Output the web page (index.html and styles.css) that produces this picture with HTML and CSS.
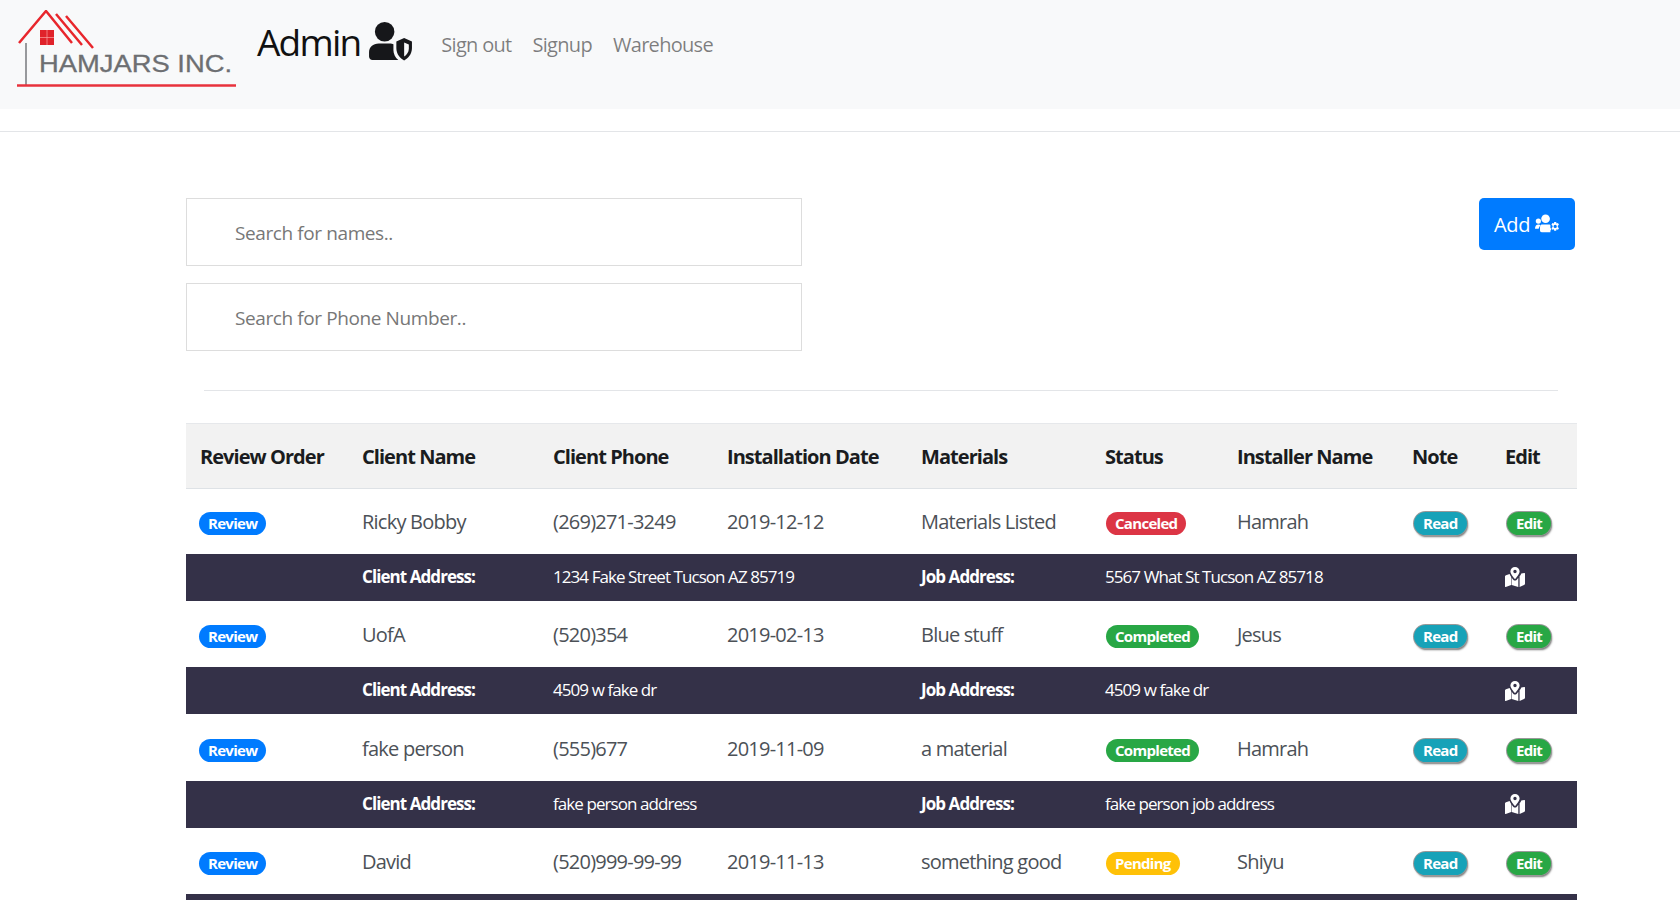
FILE: index.html
```html
<!DOCTYPE html>
<html lang="en">
<head>
  <meta charset="UTF-8" />
  <title>Hamjars Inc. Admin</title>
  <link rel="stylesheet" href="styles.css">
</head>
<body>
  <svg class="icon-defs" width="0" height="0">
    <symbol id="i-map" viewBox="0 0 20 20">
      <path d="M10 0a4.6 4.6 0 0 0-4.6 4.6c0 2 2.8 5.6 4 7 .3.4.9.4 1.2 0 1.2-1.4 4-5 4-7A4.6 4.6 0 0 0 10 0zm0 6.2a1.7 1.7 0 1 1 0-3.4 1.7 1.7 0 0 1 0 3.4z"/>
      <path d="M1 8.2 4.6 7c.3.9 1 2.2 1.6 3.1V18L.7 20c-.4.1-.7-.1-.7-.5V9.3c0-.5.4-1 1-1.1zM10 13.6c.7 0 1.3-.3 1.8-.9l1.5-2V20l-6.6-2v-7.3l1.5 2c.5.6 1.1.9 1.8.9zM19.3 6.1c.4-.1.7.1.7.5v10.2c0 .5-.4 1-1 1.1L14.6 20V9.3c1-1.3 1.5-2.3 1.7-2.9z"/>
    </symbol>
  </svg>

  <nav class="navbar">
    <svg class="logo" viewBox="0 0 220 78">
      <path class="logo-red" d="M3 33 30 1 56 33" />
      <path class="logo-red" d="M40 4 66 35M50 6 77 38" />
      <rect class="logo-fill" x="24" y="20" width="14" height="15" />
      <path class="logo-grid" d="M31 20v15M24 27.500h14" />
      <path class="logo-gray" d="M10 33V75" />
      <text class="logo-text" x="23" y="62" textLength="193" lengthAdjust="spacingAndGlyphs">HAMJARS INC.</text>
      <path class="logo-line" d="M1 75.500H220" />
    </svg>
    <div class="brand">
      <span>Admin</span>
      <svg class="brand-icon" viewBox="0 0 44 40">
        <circle cx="16" cy="10" r="10"/>
        <path d="M10 22h11c2 0 3 .3 4 .7v6.300c0 3.500 1.800 7.500 5 10H3.500C1.500 39 0 37.500 0 35.500V31c0-5 4-9 10-9z"/>
        <path fill-rule="evenodd" d="M36 16.500 28 20v7c0 6 4 10.500 8 12.500 4-2 8-6.500 8-12.500v-7zm0 4.500v14.500c2.500-1.600 4.800-4.500 4.800-8V23z"/>
      </svg>
    </div>
    <a href="#" class="nav-link">Sign out</a>
    <a href="#" class="nav-link">Signup</a>
    <a href="#" class="nav-link">Warehouse</a>
  </nav>
  <hr class="nav-rule">

  <main class="contenido">
    <div class="top-row">
      <div class="searches">
        <input class="search" placeholder="Search for names.." />
        <input class="search" placeholder="Search for Phone Number.." />
      </div>
      <a href="#" class="btn-add">Add
        <svg class="add-icon" viewBox="0 0 26 20">
          <circle cx="11" cy="4.500" r="4.500"/>
          <circle cx="3.500" cy="7" r="2.700"/>
          <path d="M0 15c0-3 1.500-4.500 3.500-4.500 1 0 1.800.3 2.500.8-1.300 1-2 2.500-2.200 3.700z"/>
          <path d="M7 10.500h7.500c1 0 1.500 .5 1.500 1v2.500l1 1.500-1 1.500v1.500H7c-1 0-1.800-.7-1.800-1.800v-3c0-1.300.8-3.200 1.800-3.200z"/>
          <path fill-rule="evenodd" d="M20 8h2l.4 1.600 1.500-.6 1 1.700-1.200 1.100v1.400l1.200 1.100-1 1.700-1.500-.6L22 17h-2l-.4-1.600-1.500.6-1-1.700 1.200-1.100v-1.400L17.100 10.700l1-1.700 1.500.6zm1 2.800a1.700 1.700 0 1 0 0 3.400 1.700 1.700 0 0 0 0-3.400z"/>
        </svg>
      </a>
    </div>

    <hr class="divider">

    <table class="tabla">
      <colgroup>
        <col class="c1"><col class="c2"><col class="c3"><col class="c4"><col class="c5">
        <col class="c6"><col class="c7"><col class="c8"><col class="c9">
      </colgroup>
      <thead>
        <tr>
          <th>Review Order</th><th>Client Name</th><th>Client Phone</th><th>Installation Date</th>
          <th>Materials</th><th>Status</th><th>Installer Name</th><th>Note</th><th>Edit</th>
        </tr>
      </thead>
      <tbody>
        <tr class="fila">
          <td><a href="#" class="badge azul">Review</a></td>
          <td>Ricky Bobby</td><td>(269)271-3249</td><td>2019-12-12</td><td>Materials Listed</td>
          <td><span class="badge rojo estado">Canceled</span></td><td>Hamrah</td>
          <td><a href="#" class="badge cian sombra">Read</a></td>
          <td><a href="#" class="badge verde sombra">Edit</a></td>
        </tr>
        <tr class="detalle">
          <td></td><th>Client Address:</th><td colspan="2">1234 Fake Street Tucson AZ 85719</td>
          <th>Job Address:</th><td colspan="3">5567 What St Tucson AZ 85718</td>
          <td><svg class="map-icon"><use href="#i-map"/></svg></td>
        </tr>
        <tr class="fila">
          <td><a href="#" class="badge azul">Review</a></td>
          <td>UofA</td><td>(520)354</td><td>2019-02-13</td><td>Blue stuff</td>
          <td><span class="badge verde estado">Completed</span></td><td>Jesus</td>
          <td><a href="#" class="badge cian sombra">Read</a></td>
          <td><a href="#" class="badge verde sombra">Edit</a></td>
        </tr>
        <tr class="detalle">
          <td></td><th>Client Address:</th><td colspan="2">4509 w fake dr</td>
          <th>Job Address:</th><td colspan="3">4509 w fake dr</td>
          <td><svg class="map-icon"><use href="#i-map"/></svg></td>
        </tr>
        <tr class="fila">
          <td><a href="#" class="badge azul">Review</a></td>
          <td>fake person</td><td>(555)677</td><td>2019-11-09</td><td>a material</td>
          <td><span class="badge verde estado">Completed</span></td><td>Hamrah</td>
          <td><a href="#" class="badge cian sombra">Read</a></td>
          <td><a href="#" class="badge verde sombra">Edit</a></td>
        </tr>
        <tr class="detalle">
          <td></td><th>Client Address:</th><td colspan="2">fake person address</td>
          <th>Job Address:</th><td colspan="3">fake person job address</td>
          <td><svg class="map-icon"><use href="#i-map"/></svg></td>
        </tr>
        <tr class="fila">
          <td><a href="#" class="badge azul">Review</a></td>
          <td>David</td><td>(520)999-99-99</td><td>2019-11-13</td><td>something good</td>
          <td><span class="badge amarillo estado">Pending</span></td><td>Shiyu</td>
          <td><a href="#" class="badge cian sombra">Read</a></td>
          <td><a href="#" class="badge verde sombra">Edit</a></td>
        </tr>
        <tr class="detalle">
          <td colspan="9"></td>
        </tr>
      </tbody>
    </table>
  </main>
</body>
</html>
```

FILE: styles.css
```css
html, body {
  height: 900px;
  overflow: hidden;
}

body {
  margin: 0;
  font-family: "Open Sans", "Noto Sans", sans-serif;
  color: #212529;
  background: #fff;
}

.icon-defs {
  display: block;
}

.navbar {
  display: flex;
  align-items: center;
  height: 109px;
  padding-left: 16px;
  background-color: #f8f9fa;
}

.logo {
  width: 220px;
  height: 78px;
  margin-right: 21px;
  margin-top: -11px;
}

.logo-red {
  fill: none;
  stroke: #e8262c;
  stroke-width: 2.500;
}

.logo-fill {
  fill: #e0222a;
}

.logo-grid {
  stroke: #f8a0a0;
  stroke-width: 0.700;
}

.logo-gray {
  stroke: #77797c;
  stroke-width: 1.500;
}

.logo-line {
  stroke: #e8323c;
  stroke-width: 2.500;
}

.logo-text {
  font-family: "Liberation Sans", sans-serif;
  font-size: 24px;
  fill: #6d6f72;
  stroke: #6d6f72;
  stroke-width: 0.300;
}

.brand {
  display: flex;
  align-items: center;
  gap: 9px;
  font-size: 37px;
  color: #111;
  margin-right: 29px;
  margin-top: -27px;
  letter-spacing: -1.800px;
}

.brand-icon {
  width: 43px;
  height: 39px;
  fill: #16171a;
}

.nav-link {
  color: rgba(0, 0, 0, 0.5);
  text-decoration: none;
  font-size: 20px;
  margin-right: 21px;
  margin-top: -20px;
  letter-spacing: -0.700px;
}

.nav-rule {
  margin: 22px 0 0;
  border: 0;
  border-top: 1px solid #e3e5e8;
}

.contenido {
  padding: 66px 103px 0 186px;
}

.top-row {
  display: flex;
  justify-content: space-between;
  align-items: flex-start;
}

.searches {
  display: flex;
  flex-direction: column;
  gap: 17px;
}

.search {
  box-sizing: border-box;
  width: 616px;
  height: 68px;
  padding: 2px 48px 0;
  border: 1px solid #ddd;
  font-family: inherit;
  font-size: 19px;
  letter-spacing: -0.4px;
  color: #495057;
  background: #fff;
}

.search::placeholder {
  color: #777;
}

.btn-add {
  display: flex;
  align-items: center;
  gap: 5px;
  box-sizing: border-box;
  width: 96px;
  height: 52px;
  margin-right: 2px;
  padding-left: 15px;
  background-color: #007bff;
  border-radius: 5px;
  color: #fff;
  text-decoration: none;
  font-size: 20px;
  letter-spacing: -0.3px;
}

.add-icon {
  width: 25px;
  height: 20px;
  fill: #fff;
}

.divider {
  margin: 39px 19px 32px 18px;
  border: 0;
  border-top: 1px solid #e3e5e8;
}

.tabla {
  width: 1391px;
  table-layout: fixed;
  border-collapse: collapse;
  font-size: 20px;
  letter-spacing: -0.770px;
}

.c1 { width: 162px; }
.c2 { width: 191px; }
.c3 { width: 174px; }
.c4 { width: 194px; }
.c5 { width: 184px; }
.c6 { width: 132px; }
.c7 { width: 175px; }
.c8 { width: 93px; }
.c9 { width: 86px; }

.tabla th, .tabla td {
  padding: 0 0 0 14px;
  text-align: left;
  white-space: nowrap;
}

.tabla thead th {
  height: 64px;
  background-color: #f2f2f2;
  border-top: 1px solid #e6e8eb;
  border-bottom: 1px solid #dee2e6;
  font-weight: 700;
  letter-spacing: -0.950px;
  color: #1a1c20;
}

.tabla .fila td {
  height: 64.500px;
  padding-top: 2px;
  color: #4c5157;
}

.tabla .fila:first-child td {
  padding-top: 0;
}

.detalle {
  background-color: #343148;
  color: #fff;
  font-size: 17px;
  letter-spacing: -0.930px;
}

.tabla .detalle td, .tabla .detalle th {
  height: 45px;
  padding-bottom: 2px;
}

.badge {
  display: inline-block;
  padding: 2px 9px 3px;
  border-radius: 12px;
  font-size: 15px;
  line-height: 18px;
  font-weight: 700;
  color: #fff;
  text-decoration: none;
  letter-spacing: -0.700px;
  vertical-align: middle;
}

.azul { background-color: #007bff; margin-left: -1px; }
.rojo { background-color: #dc3545; }
.verde { background-color: #28a745; }
.cian { background-color: #17a2b8; }
.amarillo { background-color: #ffc107; }

.estado {
  margin-left: 1px;
}

.sombra {
  margin-left: 2px;
  box-shadow: 0 0 0 1px #999, 1px 2px 2px #777;
}

.map-icon {
  display: block;
  width: 20px;
  height: 20px;
  margin-top: 2px;
  fill: #fff;
}
```
